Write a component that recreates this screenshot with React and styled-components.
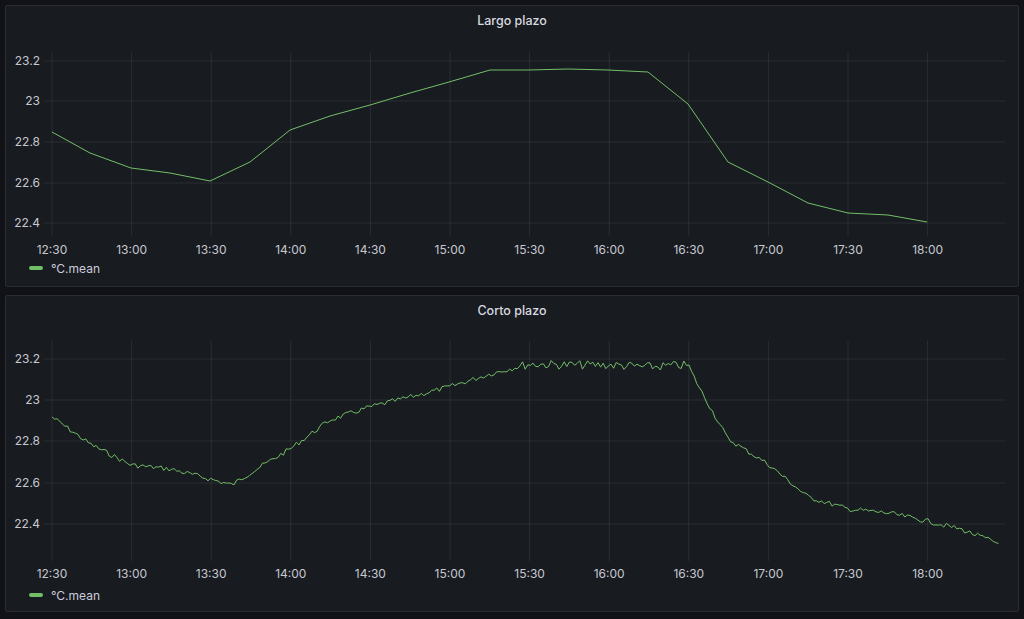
import React from "react";
import styled, { createGlobalStyle } from "styled-components";

const Global = createGlobalStyle`
  html, body { margin: 0; background: #111217; }
  body { font-family: Inter, "Noto Sans", sans-serif; color: #ccccdc; }
`;
const Page = styled.div`
  padding: 5px 5px 0 5px; display: flex; flex-direction: column; gap: 8px; width: 1014px;
`;
const Panel = styled.div`
  background: #181b1f; border: 1px solid #2a2d33; border-radius: 2px;
  display: flex; flex-direction: column; padding-bottom: ${p => p.$pb}px;
`;
const Title = styled.div`
  height: 29px; display: flex; align-items: center; justify-content: center;
  font-size: 12.5px; font-weight: 500; color: #d8d9e0;
`;
const Legend = styled.div`
  height: 20px; display: flex; align-items: center; gap: 8px; padding-left: 23px;
  font-size: 12px; color: #ccccdc;
`;
const Swatch = styled.span`width: 14px; height: 4px; border-radius: 2px; background: #73bf69;`;
const Chart = styled.svg`display: block;`;

const xs = ["12:30","13:00","13:30","14:00","14:30","15:00","15:30","16:00","16:30","17:00","17:30","18:00"];
const xPos = i => 52 + i * 79.6;

const topPts = [[52,132],[90,153],[131,168],[170,173],[210,181],[250,162],[290,130],[330,116],[370,105],[410,93],[449,82],[490,70],[529,70],[568,69],[608,70],[648,72],[688,104],[728,162],[768,182],[808,203],[848,213],[888,215],[927,222]];
const baseBot = [[52,418],[90,445],[131,466],[170,470],[210,480],[232,486],[250,474],[290,450],[330,421],[370,408],[410,398],[449,388],[490,375],[529,365],[568,366],[608,366],[648,368],[688,366],[700,390],[728,440],[768,465],[808,498],[848,510],[888,514],[927,522],[960,530],[1000,545]];

function interp(x) {
  for (let i = 0; i < baseBot.length - 1; i++) {
    const [x0,y0] = baseBot[i], [x1,y1] = baseBot[i+1];
    if (x >= x0 && x <= x1) return y0 + (y1-y0)*(x-x0)/(x1-x0);
  }
  return baseBot[baseBot.length-1][1];
}
let seed = 7;
const rnd = () => { seed = (seed * 9301 + 49297) % 233280; return seed / 233280 - 0.5; };
const botPts = [];
for (let x = 52; x <= 1000; x += 2.6) {
  const amp = x > 520 && x < 690 ? 9 : 5;
  botPts.push([x, interp(x) + rnd() * amp]);
}

function Plot({ top, height, ys, pts, gridTop, gridBottom, labelY }) {
  return (
    <Chart width="1012" height={height} viewBox={`6 ${top} 1012 ${height}`}>
      {ys.map(([v, y]) => (
        <g key={v}>
          <line x1="44" x2="1005" y1={y} y2={y} stroke="rgba(204,204,220,0.1)" />
          <text x="40" y={y + 4} textAnchor="end" fontSize="12" fill="#c7c8d2">{v}</text>
        </g>
      ))}
      {xs.map((l, i) => (
        <g key={l}>
          <line x1={xPos(i)} x2={xPos(i)} y1={gridTop} y2={gridBottom} stroke="rgba(204,204,220,0.1)" />
          <text x={xPos(i)} y={labelY} textAnchor="middle" fontSize="12" fill="#c7c8d2">{l}</text>
        </g>
      ))}
      <polyline points={pts.map(p => p.join(",")).join(" ")} fill="none" stroke="#73bf69" strokeWidth="1" />
    </Chart>
  );
}

export default function App() {
  return (
    <Page>
      <Global />
      <Panel $pb={8}>
        <Title>Largo plazo</Title>
        <Plot top={35} height={223} pts={topPts} gridTop={52} gridBottom={236} labelY={254}
          ys={[["23.2",61],["23",101],["22.8",142],["22.6",183],["22.4",223]]} />
        <Legend><Swatch />°C.mean</Legend>
      </Panel>
      <Panel $pb={6}>
        <Title>Corto plazo</Title>
        <Plot top={326} height={260} pts={botPts} gridTop={342} gridBottom={562} labelY={579}
          ys={[["23.2",360],["23",401],["22.8",442],["22.6",484],["22.4",525]]} />
        <Legend><Swatch />°C.mean</Legend>
      </Panel>
    </Page>
  );
}
